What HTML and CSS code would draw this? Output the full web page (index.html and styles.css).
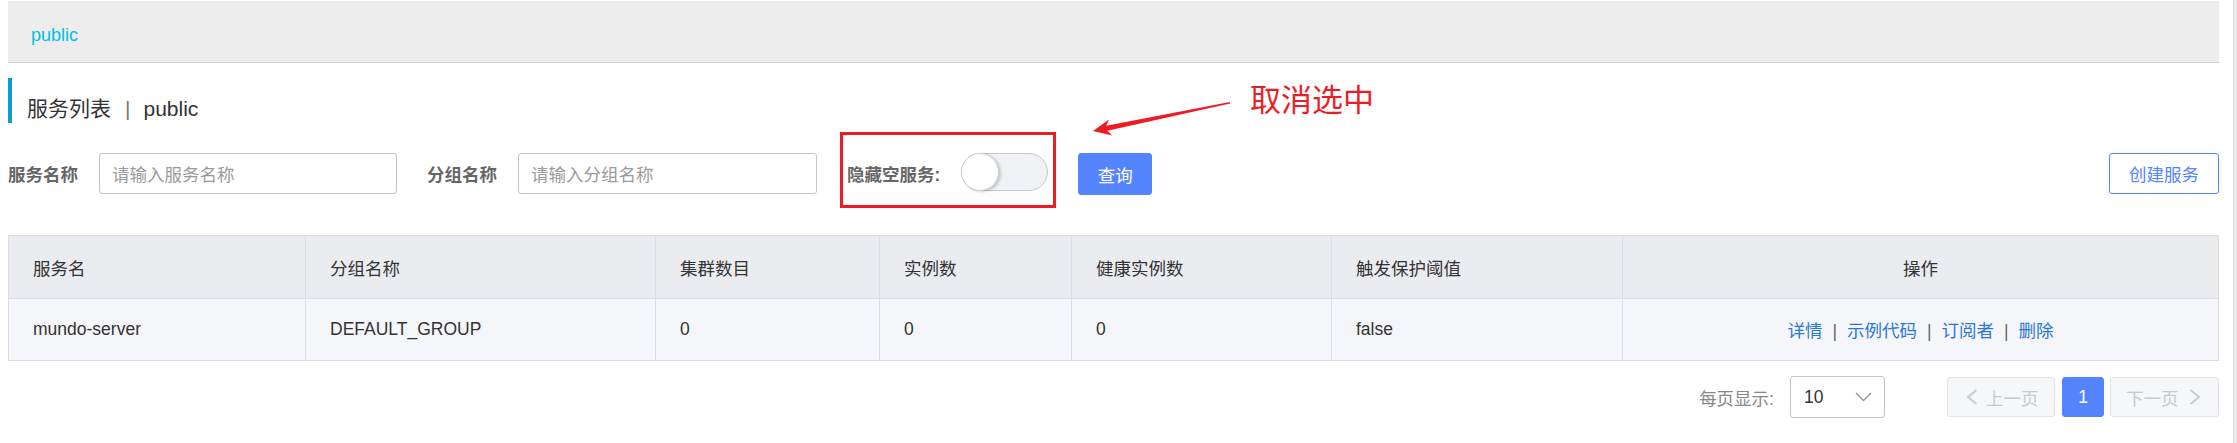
FILE: index.html
```html
<!DOCTYPE html>
<html lang="zh-CN">
<head>
<meta charset="utf-8">
<title>服务列表</title>
<link rel="stylesheet" href="styles.css">
</head>
<body>
<div class="page">
  <main class="main">
    <div class="crumb"><span class="crumb-item">public</span></div>

    <h1 class="page-title">服务列表<span class="title-sep">|</span>public</h1>

    <div class="filters">
      <label class="field-label">服务名称</label>
      <input class="text-input" type="text" placeholder="请输入服务名称">
      <label class="field-label">分组名称</label>
      <input class="text-input text-input-wide" type="text" placeholder="请输入分组名称">
      <div class="hide-empty">
        <span class="field-label">隐藏空服务:</span>
        <span class="switch"><span class="switch-knob"></span></span>
      </div>
      <button class="btn btn-primary" type="button">查询</button>
      <button class="btn btn-outline" type="button">创建服务</button>
    </div>

    <table class="svc-table">
      <colgroup>
        <col class="col-name">
        <col class="col-group">
        <col class="col-cluster">
        <col class="col-inst">
        <col class="col-healthy">
        <col class="col-protect">
        <col class="col-ops">
      </colgroup>
      <thead>
        <tr>
          <th>服务名</th>
          <th>分组名称</th>
          <th>集群数目</th>
          <th>实例数</th>
          <th>健康实例数</th>
          <th>触发保护阈值</th>
          <th class="ops">操作</th>
        </tr>
      </thead>
      <tbody>
        <tr>
          <td>mundo-server</td>
          <td>DEFAULT_GROUP</td>
          <td>0</td>
          <td>0</td>
          <td>0</td>
          <td>false</td>
          <td class="ops"><a class="link">详情</a><span class="op-sep">|</span><a class="link">示例代码</a><span class="op-sep">|</span><a class="link">订阅者</a><span class="op-sep">|</span><a class="link">删除</a></td>
        </tr>
      </tbody>
    </table>

    <div class="pagination">
      <span class="page-size-label">每页显示:</span>
      <div class="select">
        <span class="select-value">10</span>
        <svg class="select-arrow" viewBox="0 0 17 10" width="17" height="10"><polyline points="1,1 8.5,8.5 16,1" fill="none" stroke="#9a9a9a" stroke-width="1.4"/></svg>
      </div>
      <div class="page-btn page-prev">
        <svg viewBox="0 0 12 16" width="12" height="16"><polyline points="10.5,1 2,8 10.5,15" fill="none" stroke="#cbcbcb" stroke-width="2"/></svg>
        <span>上一页</span>
      </div>
      <div class="page-btn page-current">1</div>
      <div class="page-btn page-next">
        <span>下一页</span>
        <svg viewBox="0 0 12 16" width="12" height="16"><polyline points="1.5,1 10,8 1.5,15" fill="none" stroke="#cbcbcb" stroke-width="2"/></svg>
      </div>
    </div>

    <div class="annotation-text">取消选中</div>
    <svg class="annotation-arrow" viewBox="1085 95 150 45" width="150" height="45">
      <polygon fill="#ed1c24" points="1093,131 1109,119.6 1106.2,125.8 1229.9,102 1230.1,103.6 1107.4,130.8 1112.2,135.4"/>
    </svg>
  </main>
  <div class="scrollbar"></div>
</div>
</body>
</html>
```

FILE: styles.css
```css
* {
  box-sizing: border-box;
}

html,
body {
  margin: 0;
  padding: 0;
  background: #fff;
}

body {
  font-family: "Liberation Sans", "Noto Sans CJK SC", sans-serif;
  font-size: 17.5px;
  color: #333;
}

.page {
  display: flex;
  width: 2237px;
  height: 443px;
  overflow: hidden;
}

.main {
  flex: 1;
  position: relative;
  padding: 1px 14px 0 8px;
}

.scrollbar {
  width: 4px;
  background: #ececec;
  border-left: 1px solid #dcdcdc;
}

/* breadcrumb bar */
.crumb {
  height: 62px;
  background: #ededed;
  border-bottom: 1px solid #cfcfcf;
  padding: 22px 0 0 23px;
  font-size: 18px;
  line-height: 24px;
}

.crumb-item {
  color: #00c1de;
}

/* title */
.page-title {
  margin: 15px 0 0;
  height: 45px;
  border-left: 4px solid #0e9bd0;
  padding: 19px 0 0 15px;
  font-size: 21px;
  line-height: 24px;
  font-weight: 400;
  color: #333;
}

.title-sep {
  margin: 0 13px 0 14px;
  color: #777;
}

/* filter row */
.filters {
  display: flex;
  align-items: flex-start;
  margin-top: 30px;
}

.field-label {
  font-weight: 700;
  color: #666;
  line-height: 38px;
  padding-top: 3px;
  white-space: nowrap;
  margin-right: 21px;
}

.text-input {
  width: 298px;
  height: 41px;
  border: 1px solid #c4c6cf;
  border-radius: 3px;
  padding: 3px 12px 0;
  font: inherit;
  color: #333;
  background: #fff;
  margin-right: 30px;
  outline: none;
}

.text-input::placeholder {
  color: #9b9b9b;
}

.text-input-wide {
  width: 299px;
}

.hide-empty {
  display: flex;
  align-items: flex-start;
  position: relative;
  margin-right: 30px;
}

.hide-empty::after {
  content: "";
  position: absolute;
  left: -7px;
  right: -8px;
  top: -21px;
  bottom: -14px;
  border: 3px solid #ed1c24;
  pointer-events: none;
}

.switch {
  display: flex;
  align-items: center;
  width: 87px;
  height: 38px;
  border: 1px solid #c4c6cf;
  border-radius: 19px;
  background: #f1f2f6;
}

.switch-knob {
  width: 38px;
  height: 38px;
  margin: -1px;
  border-radius: 50%;
  background: #fff;
  border: 1px solid #cfd1d8;
  box-shadow: 2px 1px 3px rgba(0, 0, 0, 0.18);
}

.btn {
  font: inherit;
  border-radius: 3px;
  cursor: pointer;
  padding: 0;
}

.btn-primary {
  width: 74px;
  height: 42px;
  background: #5584ff;
  border: 1px solid #5584ff;
  color: #fff;
}

.btn-outline {
  margin-left: auto;
  width: 110px;
  height: 41px;
  background: #fff;
  border: 1px solid #5584ff;
  color: #5584ff;
}

/* table */
.svc-table {
  width: 100%;
  margin-top: 40px;
  border-collapse: collapse;
  table-layout: fixed;
}

.col-name { width: 297px; }
.col-group { width: 350px; }
.col-cluster { width: 224px; }
.col-inst { width: 192px; }
.col-healthy { width: 260px; }
.col-protect { width: 291px; }

.svc-table th,
.svc-table td {
  border: 1px solid #dcdee3;
  padding: 0 24px;
  text-align: left;
  font-weight: 400;
  white-space: nowrap;
  color: #333;
}

.svc-table th {
  background: #ebecf0;
  height: 63px;
}

.svc-table td {
  background: #f5f6f9;
  height: 62px;
}

.svc-table .ops {
  text-align: center;
}

.link {
  color: #2a78d6;
  cursor: pointer;
}

.op-sep {
  margin: 0 10px;
  color: #666;
}

/* pagination */
.pagination {
  display: flex;
  justify-content: flex-end;
  align-items: center;
  margin-top: 15px;
}

.page-size-label {
  color: #888;
  margin-right: 16px;
}

.select {
  display: flex;
  align-items: center;
  justify-content: space-between;
  width: 95px;
  height: 42px;
  border: 1px solid #c4c6cf;
  border-radius: 3px;
  padding: 0 12px 0 13px;
  margin-right: 62px;
  color: #333;
}

.page-btn {
  display: flex;
  align-items: center;
  height: 40px;
  border: 1px solid #e3e4e8;
  background: #f6f7f9;
  color: #c8c9cc;
  border-radius: 3px;
}

.page-prev {
  width: 108px;
  padding-left: 18px;
  gap: 8px;
}

.page-current {
  width: 42px;
  justify-content: center;
  margin: 0 6px 0 7px;
  background: #5584ff;
  border-color: #5584ff;
  color: #fff;
}

.page-next {
  width: 109px;
  padding-left: 15px;
  gap: 10px;
}

/* annotation overlay */
.annotation-text {
  position: absolute;
  left: 1250px;
  top: 82px;
  font-family: "Noto Sans CJK SC", sans-serif;
  font-size: 31px;
  line-height: 31px;
  color: #ed1c24;
  white-space: nowrap;
}

.annotation-arrow {
  position: absolute;
  left: 1085px;
  top: 95px;
}
```
